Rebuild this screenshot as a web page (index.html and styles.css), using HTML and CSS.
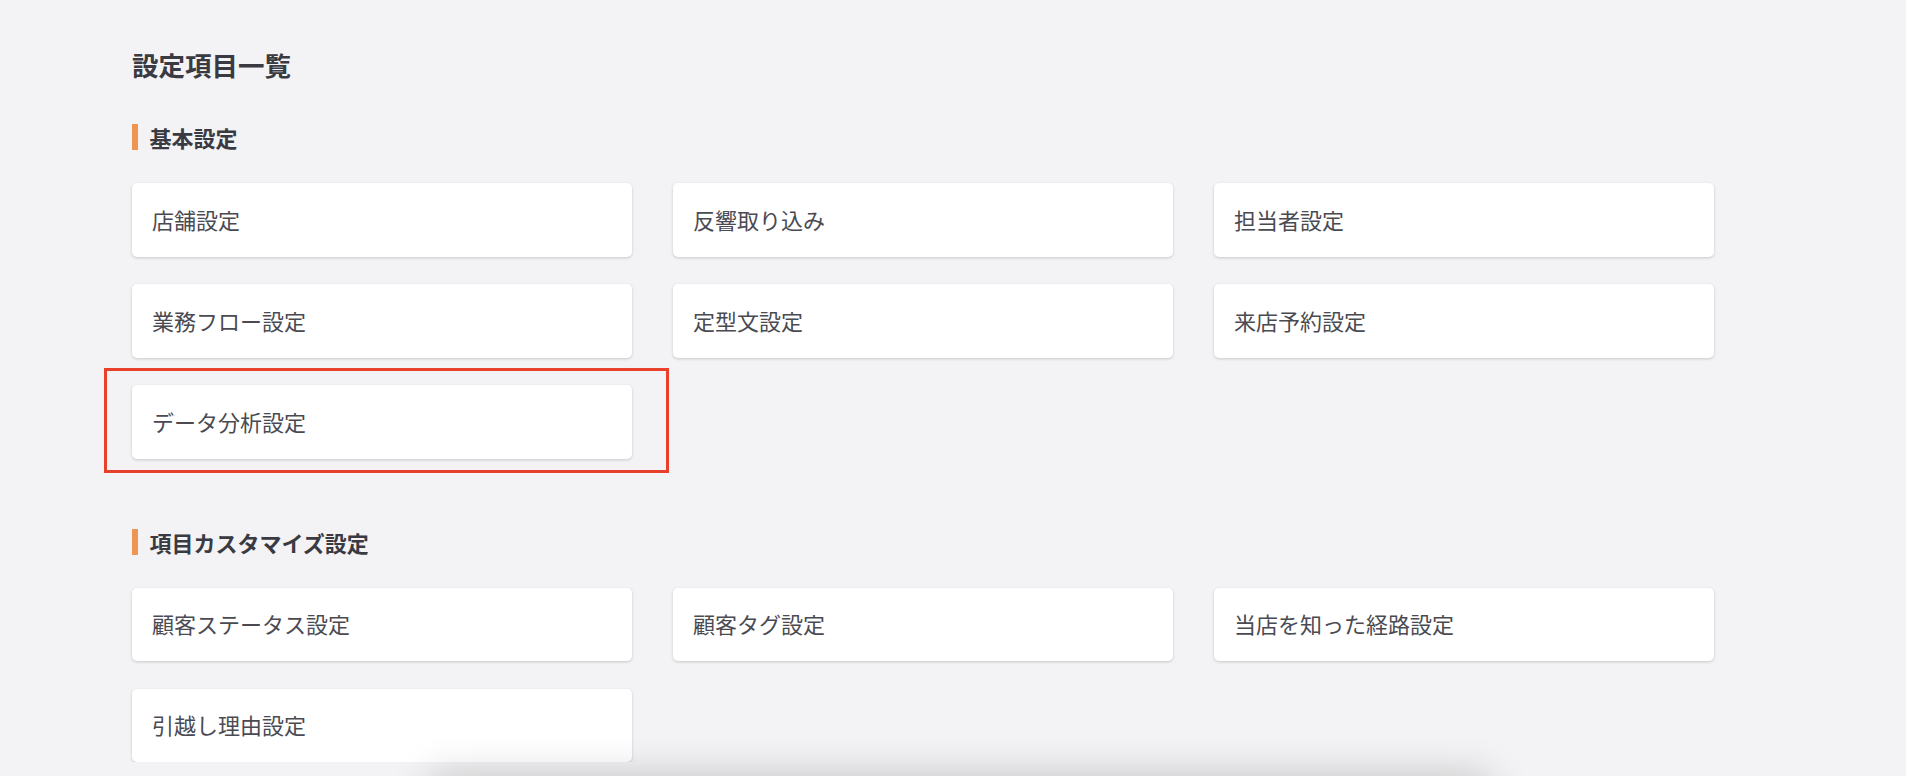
FILE: index.html
```html
<!DOCTYPE html>
<html lang="ja">
<head>
    <meta charset="UTF-8">
    <meta name="viewport" content="width=device-width, initial-scale=1.0">
    <title>設定項目一覧</title>
    <link rel="stylesheet" href="styles.css">
</head>
<body>
    <main class="page">
        <h1 class="page-title">設定項目一覧</h1>

        <!-- 基本設定 -->
        <section class="group">
            <h2 class="group-title">基本設定</h2>
            <div class="card-grid">
                <a href="#" class="card">店舗設定</a>
                <a href="#" class="card">反響取り込み</a>
                <a href="#" class="card">担当者設定</a>
                <a href="#" class="card">業務フロー設定</a>
                <a href="#" class="card">定型文設定</a>
                <a href="#" class="card">来店予約設定</a>
                <a href="#" class="card card-marked">データ分析設定</a>
            </div>
        </section>

        <!-- 項目カスタマイズ設定 -->
        <section class="group">
            <h2 class="group-title">項目カスタマイズ設定</h2>
            <div class="card-grid">
                <a href="#" class="card">顧客ステータス設定</a>
                <a href="#" class="card">顧客タグ設定</a>
                <a href="#" class="card">当店を知った経路設定</a>
                <a href="#" class="card">引越し理由設定</a>
            </div>
        </section>
    </main>

    <div class="bottom-bar"></div>
</body>
</html>
```

FILE: styles.css
```css
body {
    margin: 0;
    background-color: #f3f3f5;
    font-family: "Noto Sans CJK JP", "Noto Sans", sans-serif;
    color: #3b3b43;
    overflow: hidden;
}

.page {
    padding: 47px 0 0 132px;
}

.page-title {
    margin: 0;
    font-size: 26.5px;
    line-height: 36px;
    font-weight: bold;
    color: #3a3a42;
}

.group {
    margin-top: 41px;
}

.group + .group {
    margin-top: 70px;
}

.group-title {
    display: flex;
    align-items: center;
    gap: 12px;
    margin: 0 0 33px;
    font-size: 22px;
    line-height: 26px;
    font-weight: bold;
    color: #3a3a42;
}

.group-title::before {
    content: "";
    width: 5.5px;
    height: 26px;
    background-color: #ee9651;
}

.card-grid {
    display: grid;
    grid-template-columns: repeat(3, 499.5px);
    column-gap: 41.5px;
    row-gap: 27.5px;
}

.card {
    position: relative;
    display: flex;
    align-items: center;
    height: 73.5px;
    padding: 0 20px 2px;
    box-sizing: border-box;
    background: #fff;
    border-radius: 5px;
    box-shadow: 0 1px 3px rgba(0, 0, 0, 0.18);
    color: #4a4a52;
    font-size: 22px;
    text-decoration: none;
}

.card-marked::after {
    content: "";
    position: absolute;
    top: -17.5px;
    left: -28px;
    right: -37px;
    bottom: -14px;
    border: 3px solid #e8402a;
}

.bottom-bar {
    position: fixed;
    left: 430px;
    width: 1060px;
    bottom: -50px;
    height: 50px;
    background: #fff;
    box-shadow: 0 0 40px rgba(0, 0, 0, 0.2);
}
```
